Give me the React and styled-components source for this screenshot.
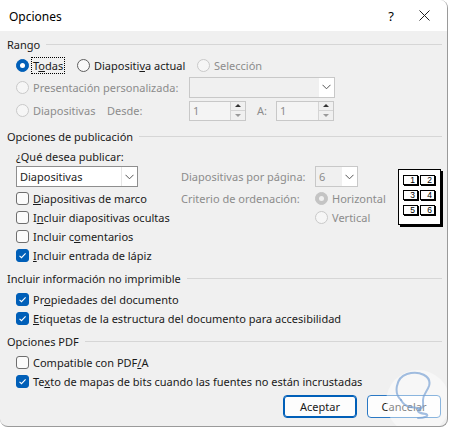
import React from "react";
import styled, { createGlobalStyle, css } from "styled-components";

const Global = createGlobalStyle`
  html, body { margin: 0; padding: 0; background: #ffffff; }
  body { font-family: "Noto Sans", "Liberation Sans", sans-serif; font-size: 11px; color: #1a1a1a; }
  * { box-sizing: border-box; }
`;

const Window = styled.div`
  position: relative;
  width: 448px;
  height: 427px;
  border: 1px solid #9a9a9a;
  border-left: none;
  border-top: none;
  border-radius: 0 8px 8px 8px;
  background: #f0f0f0;
  overflow: hidden;
  display: flex;
  flex-direction: column;
`;

const TitleBar = styled.div`
  height: 31px;
  background: #ffffff;
  display: flex;
  align-items: center;
  padding-left: 9px;
  font-size: 12px;
  color: #000;
`;

const TitleText = styled.div`
  flex: 1;
  padding-top: 1px;
`;

const TitleButton = styled.div`
  width: ${p => p.$w}px;
  height: 31px;
  display: flex;
  align-items: center;
  justify-content: center;
  font-size: 13px;
`;

const Content = styled.div`
  flex: 1;
  padding: 5px 5px 0 7px;
  display: flex;
  flex-direction: column;
`;

const Heading = styled.div`
  height: 16px;
  display: flex;
  align-items: center;
  gap: 6px;
  margin-top: ${p => p.$mt || 0}px;
  color: #1a1a1a;
  &::after {
    content: "";
    flex: 1;
    height: 1px;
    background: #d6d6d6;
  }
`;

const Row = styled.div`
  display: flex;
  align-items: center;
  height: ${p => p.$h || 19}px;
  margin-top: ${p => p.$mt || 0}px;
  padding-left: ${p => (p.$pl === undefined ? 9 : p.$pl)}px;
`;

const Option = styled.label`
  display: flex;
  align-items: center;
  gap: 4px;
  width: ${p => (p.$w ? p.$w + "px" : "auto")};
  flex-shrink: 0;
  color: ${p => (p.$disabled ? "#8c8c8c" : "#1a1a1a")};
`;

const Focus = styled.span`
  outline: 1px dotted #000;
  outline-offset: 0px;
  padding: 0 1px;
  margin-left: -1px;
`;

const RadioDot = styled.span`
  width: 13px;
  height: 13px;
  border-radius: 50%;
  flex-shrink: 0;
  position: relative;
  ${p =>
    p.$checked && !p.$disabled
      ? css`background: #005fb8; border: 1px solid #005fb8;`
      : p.$checked && p.$disabled
      ? css`background: #c4c4c4; border: 1px solid #c4c4c4;`
      : p.$disabled
      ? css`background: #f6f6f6; border: 1px solid #c9c9c9;`
      : css`background: #f9f9f9; border: 1px solid #5e5e5e;`}
  ${p =>
    p.$checked &&
    css`
      &::after {
        content: "";
        position: absolute;
        left: 3px;
        top: 3px;
        width: 5px;
        height: 5px;
        border-radius: 50%;
        background: ${p.$disabled ? "#f0f0f0" : "#ffffff"};
      }
    `}
`;

const Box = styled.span`
  width: 13px;
  height: 13px;
  border-radius: 3px;
  flex-shrink: 0;
  display: flex;
  align-items: center;
  justify-content: center;
  ${p =>
    p.$checked
      ? css`background: #005fb8; border: 1px solid #005fb8;`
      : css`background: #fbfbfb; border: 1px solid #6e6e6e;`}
`;

const Check = () => (
  <svg width="9" height="9" viewBox="0 0 9 9">
    <path d="M1.5 4.8 L3.5 6.7 L7.6 2.3" fill="none" stroke="#fff" strokeWidth="1.1" />
  </svg>
);

const Radio = ({ checked, disabled, children, w, focus }) => (
  <Option $disabled={disabled} $w={w}>
    <RadioDot $checked={checked} $disabled={disabled} />
    {focus ? <Focus>{children}</Focus> : <span>{children}</span>}
  </Option>
);

const CheckBox = ({ checked, children }) => (
  <Option>
    <Box $checked={checked}>{checked && <Check />}</Box>
    <span>{children}</span>
  </Option>
);

const Label = styled.span`
  width: ${p => (p.$w ? p.$w + "px" : "auto")};
  padding-left: ${p => p.$pl || 0}px;
  flex-shrink: 0;
  color: ${p => (p.$disabled ? "#8c8c8c" : "#1a1a1a")};
`;

const Combo = styled.div`
  width: ${p => p.$w}px;
  height: 21px;
  display: flex;
  border: 1px solid ${p => (p.$disabled ? "#c8c8c8" : "#8e8e8e")};
  background: ${p => (p.$disabled ? "#f0f0f0" : "#ffffff")};
  color: ${p => (p.$disabled ? "#8c8c8c" : "#1a1a1a")};
  flex-shrink: 0;
`;

const ComboText = styled.div`
  flex: 1;
  display: flex;
  align-items: center;
  padding-left: 3px;
`;

const ComboArrow = styled.div`
  width: 16px;
  background: #ffffff;
  border-left: 1px solid ${p => (p.$disabled ? "#f0f0f0" : "#e6e6e6")};
  display: flex;
  align-items: center;
  justify-content: center;
`;

const Chevron = () => (
  <svg width="9" height="6" viewBox="0 0 9 6">
    <path d="M0.5 0.8 L4.5 4.8 L8.5 0.8" fill="none" stroke="#555" strokeWidth="1" />
  </svg>
);

const Spin = styled.div`
  width: ${p => p.$w}px;
  height: 20px;
  display: flex;
  border: 1px solid #c8c8c8;
  background: #f4f4f4;
  color: #8c8c8c;
  flex-shrink: 0;
`;

const SpinButtons = styled.div`
  width: 15px;
  display: flex;
  flex-direction: column;
  border-left: 1px solid #d4d4d4;
`;

const SpinBtn = styled.div`
  flex: 1;
  display: flex;
  align-items: center;
  justify-content: center;
  background: #f0f0f0;
  & + & { border-top: 1px solid #d4d4d4; }
  &::after {
    content: "";
    border-left: 3px solid transparent;
    border-right: 3px solid transparent;
    ${p =>
      p.$up
        ? css`border-bottom: 3px solid #333;`
        : css`border-top: 3px solid #9a9a9a;`}
  }
`;

const SpinBox = ({ w, value }) => (
  <Spin $w={w}>
    <ComboText>{value}</ComboText>
    <SpinButtons>
      <SpinBtn $up />
      <SpinBtn />
    </SpinButtons>
  </Spin>
);

const Publish = styled.div`
  display: flex;
  margin-top: 4px;
  padding-left: 9px;
`;

const LeftCol = styled.div`
  width: 165px;
  display: flex;
  flex-direction: column;
`;

const MidCol = styled.div`
  width: 217px;
  padding-top: 17px;
  display: flex;
  flex-direction: column;
`;

const Preview = styled.div`
  margin-top: 21px;
  width: 43px;
  height: 56px;
  background: #fff;
  border: 1px solid #000;
  box-shadow: 2px 2px 0 #000;
  display: grid;
  grid-template-columns: 15px 15px;
  grid-auto-rows: 10px;
  column-gap: 2px;
  row-gap: 5px;
  padding: 5px 0 0 4px;
`;

const Cell = styled.div`
  border: 1px solid #000;
  box-shadow: 1px 1px 0 #000;
  font-family: "Liberation Sans", sans-serif;
  font-size: 8.5px;
  line-height: 8px;
  text-align: right;
  padding-right: 2px;
  color: #000;
`;

const Footer = styled.div`
  display: flex;
  justify-content: flex-end;
  gap: 10px;
  margin-top: 4px;
  padding-right: 1px;
`;

const Button = styled.div`
  width: 74px;
  height: 23px;
  border-radius: 4px;
  background: #fdfdfd;
  border: 1px solid ${p => (p.$primary ? "#005fb8" : "#2a78c4")};
  box-shadow: ${p => (p.$primary ? "inset 0 0 0 1px #005fb8" : "none")};
  display: flex;
  align-items: center;
  justify-content: center;
  color: #1a1a1a;
`;

const Watermark = styled.svg`
  position: absolute;
  right: -3px;
  bottom: -8px;
  pointer-events: none;
`;

const U = styled.u`
  text-underline-offset: 1px;
`;

export default function App() {
  return (
    <>
      <Global />
      <Window>
        <TitleBar>
          <TitleText>Opciones</TitleText>
          <TitleButton $w={20}>?</TitleButton>
          <TitleButton $w={46}>
            <svg width="11" height="11" viewBox="0 0 11 11">
              <path d="M0.5 0.5 L10.5 10.5 M10.5 0.5 L0.5 10.5" stroke="#222" strokeWidth="1" />
            </svg>
          </TitleButton>
        </TitleBar>
        <Content>
          <Heading>Rango</Heading>
          <Row $h={20} $mt={3}>
            <Radio checked focus w={61}>
              T<U>o</U>das
            </Radio>
            <Radio w={120}>
              Diapositi<U>v</U>a actual
            </Radio>
            <Radio disabled>Selección</Radio>
          </Row>
          <Row $h={22} $mt={1}>
            <Radio disabled w={173}>
              Presentación personalizada:
            </Radio>
            <Combo $w={146} $disabled>
              <ComboText />
              <ComboArrow $disabled>
                <Chevron />
              </ComboArrow>
            </Combo>
          </Row>
          <Row $h={21} $mt={2}>
            <Radio disabled w={91}>
              Diapositivas
            </Radio>
            <Label $disabled $w={82}>
              Desde:
            </Label>
            <SpinBox w={57} value="1" />
            <Label $disabled $w={30} $pl={11}>
              A:
            </Label>
            <SpinBox w={58} value="1" />
          </Row>

          <Heading $mt={7}>Opciones de publicación</Heading>
          <Publish>
            <LeftCol>
              <Row $h={17} $pl={0}>
                <Label>
                  <U>¿</U>Qué desea publicar:
                </Label>
              </Row>
              <Row $h={21} $pl={0} $mt={1}>
                <Combo $w={122}>
                  <ComboText>Diapositivas</ComboText>
                  <ComboArrow>
                    <Chevron />
                  </ComboArrow>
                </Combo>
              </Row>
              <Row $pl={0} $mt={2}>
                <CheckBox>
                  <U>D</U>iapositivas de marco
                </CheckBox>
              </Row>
              <Row $pl={0}>
                <CheckBox>
                  I<U>n</U>cluir diapositivas ocultas
                </CheckBox>
              </Row>
              <Row $pl={0}>
                <CheckBox>
                  Incluir c<U>o</U>mentarios
                </CheckBox>
              </Row>
              <Row $pl={0}>
                <CheckBox checked>
                  <U>I</U>ncluir entrada de lápiz
                </CheckBox>
              </Row>
            </LeftCol>
            <MidCol>
              <Row $h={21} $pl={0} $mt={1}>
                <Label $disabled $w={134}>
                  Diapositivas por página:
                </Label>
                <Combo $w={43} $disabled>
                  <ComboText>6</ComboText>
                  <ComboArrow $disabled>
                    <Chevron />
                  </ComboArrow>
                </Combo>
              </Row>
              <Row $pl={0} $mt={2}>
                <Label $disabled $w={134}>
                  Criterio de ordenación:
                </Label>
                <Radio checked disabled>
                  Horizontal
                </Radio>
              </Row>
              <Row $pl={134}>
                <Radio disabled>Vertical</Radio>
              </Row>
            </MidCol>
            <Preview>
              {[1, 2, 3, 4, 5, 6].map(n => (
                <Cell key={n}>{n}</Cell>
              ))}
            </Preview>
          </Publish>

          <Heading $mt={5}>Incluir información no imprimible</Heading>
          <Row $mt={4}>
            <CheckBox checked>
              Pr<U>o</U>piedades del documento
            </CheckBox>
          </Row>
          <Row>
            <CheckBox checked>
              <U>E</U>tiquetas de la estructura del documento para accesibilidad
            </CheckBox>
          </Row>

          <Heading $mt={5}>Opciones PDF</Heading>
          <Row $mt={4}>
            <CheckBox>
              Compatible con PDF<U>/</U>A
            </CheckBox>
          </Row>
          <Row>
            <CheckBox checked>
              Te<U>x</U>to de mapas de bits cuando las fuentes no están incrustadas
            </CheckBox>
          </Row>

          <Footer>
            <Button $primary>Aceptar</Button>
            <Button>Cancelar</Button>
          </Footer>
        </Content>
        <Watermark width="64" height="64" viewBox="0 0 64 64">
          <circle cx="32" cy="32" r="32" fill="#ffffff" opacity="0.45" />
          <path
            d="M15 30 C8 24 9 8 21 4 C33 0 46 6 43 16 C41 22 37 24 37 30 C37 35 38 37 34 39 C30 41 32 43 40 44 C44 46 38 48 32 48"
            fill="none"
            stroke="#7aa3d4"
            strokeWidth="2"
            strokeLinecap="round"
            opacity="0.7"
          />
          <path d="M15 30 C17 34 20 36 24 37 C28 38 30 37 34 39" fill="none" stroke="#7aa3d4" strokeWidth="2" strokeLinecap="round" opacity="0.7" />
        </Watermark>
      </Window>
    </>
  );
}
